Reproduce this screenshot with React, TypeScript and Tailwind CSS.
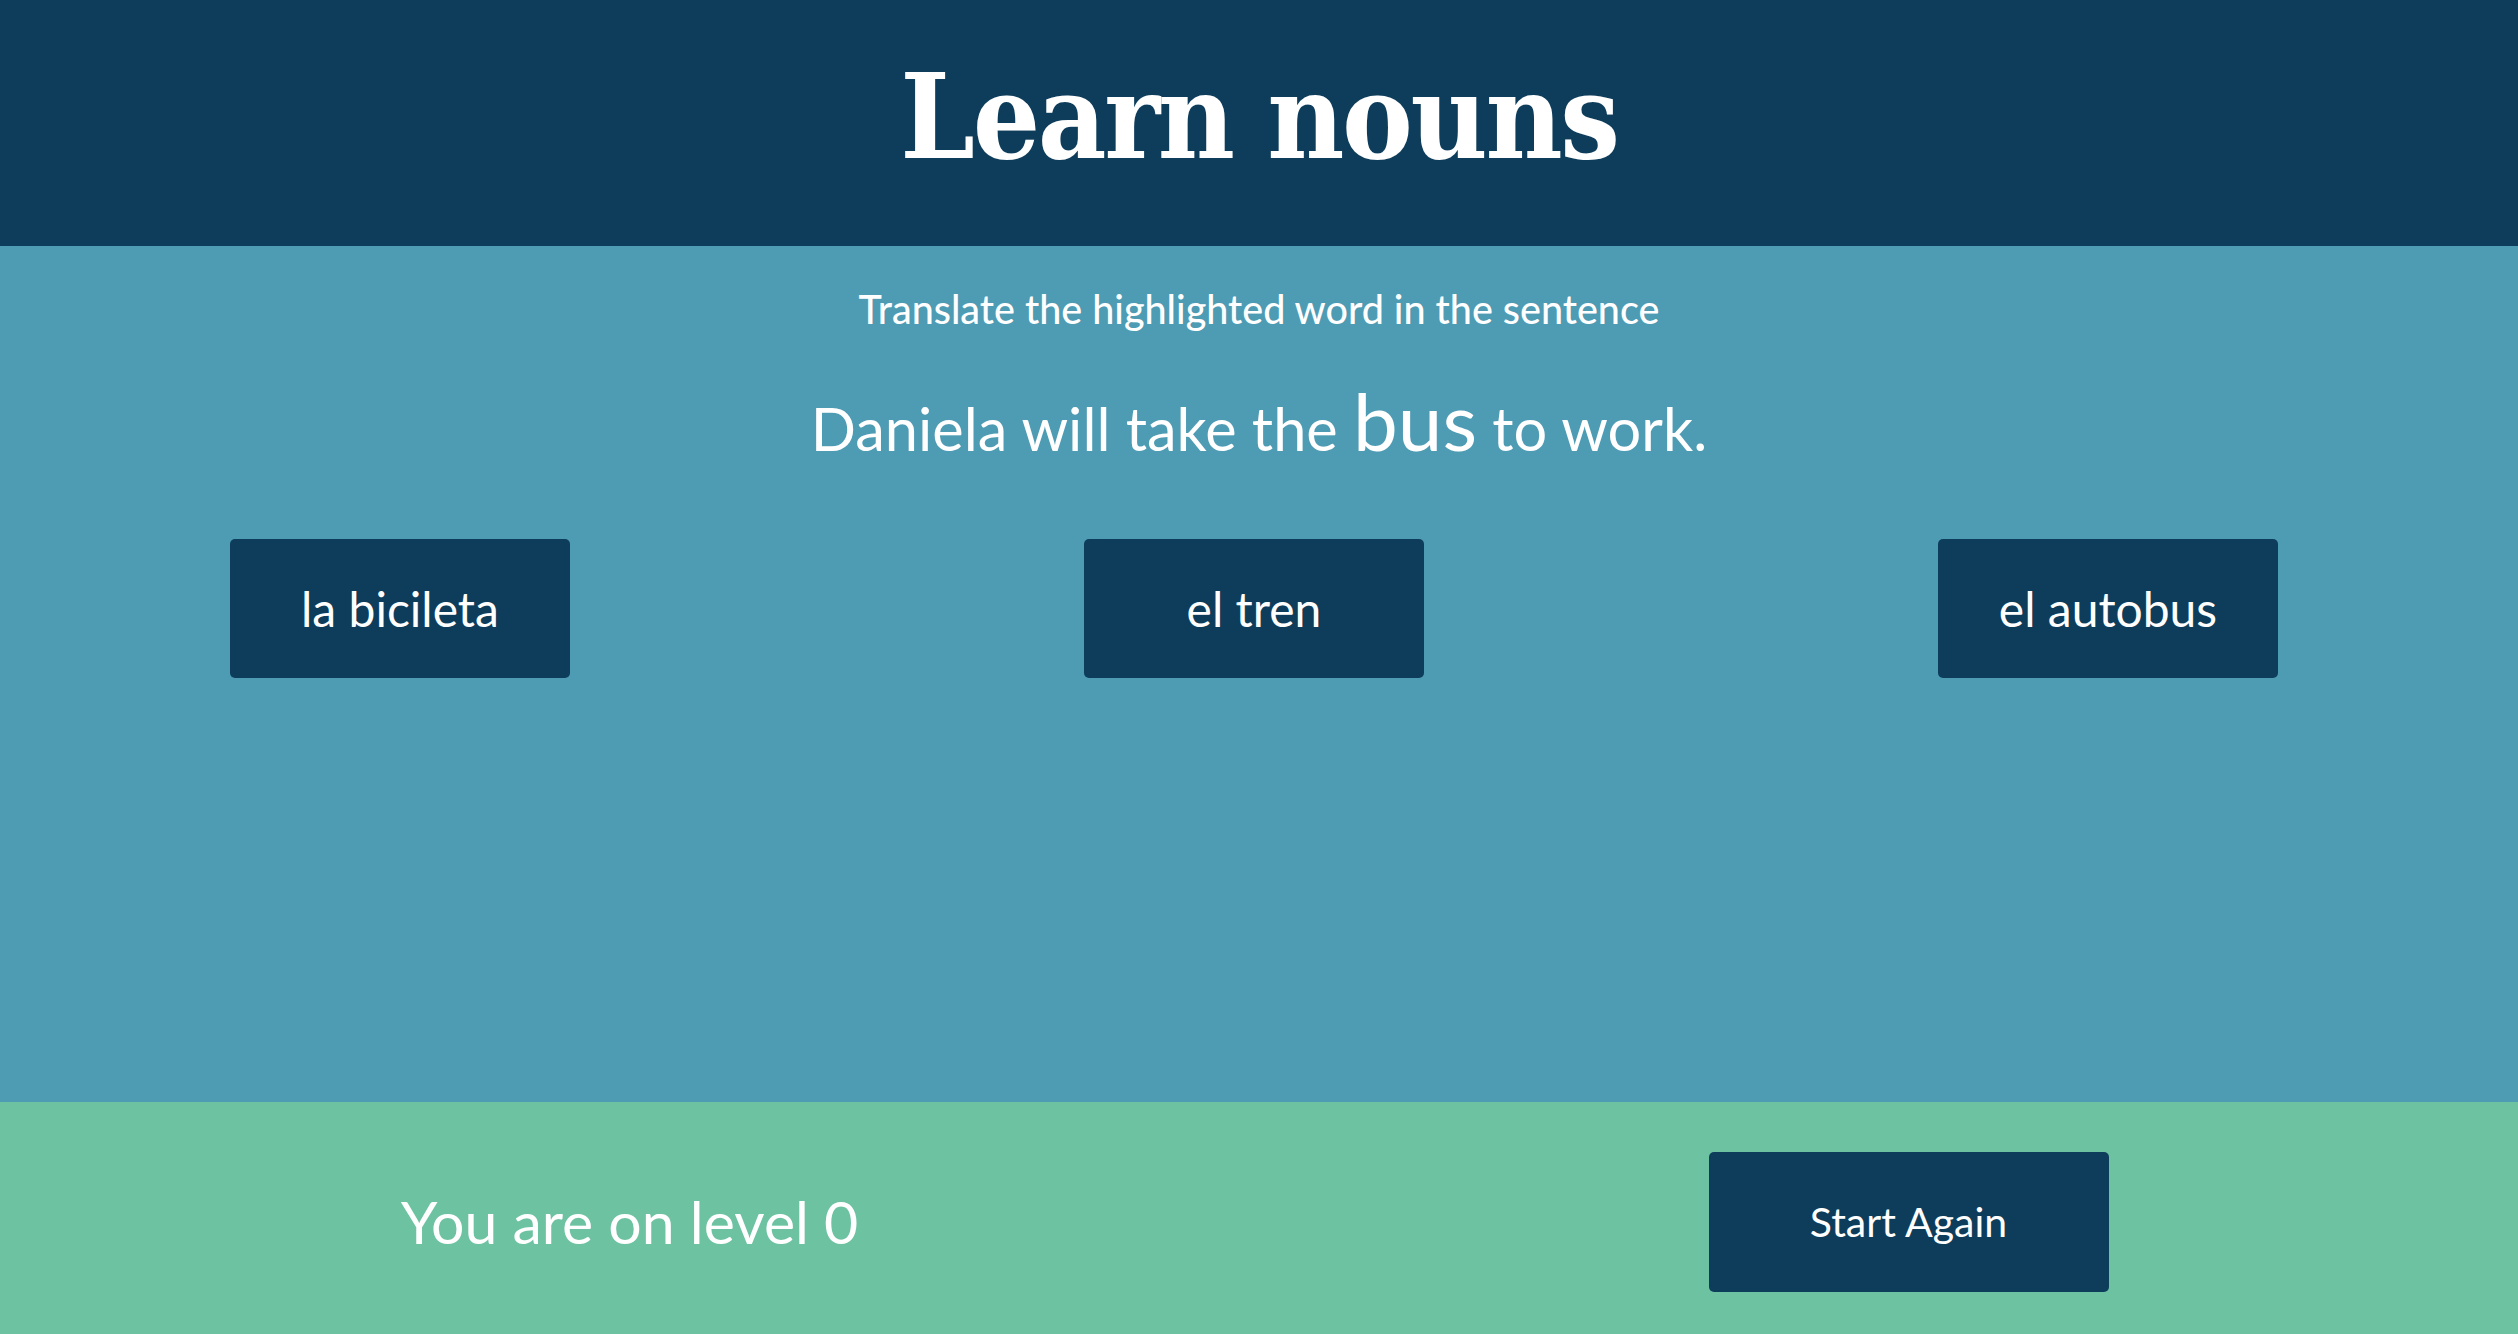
import React from 'react';

const choices = ['la bicileta', 'el tren', 'el autobus'];

const lato = "font-['Lato','Liberation_Sans',sans-serif]";

const ChoiceButton: React.FC<{ label: string }> = ({ label }) => (
  <button
    className={`w-[340px] h-[139px] rounded-[5px] bg-[#0e3d5b] text-white text-[48px] leading-[1.2] ${lato}`}
  >
    {label}
  </button>
);

export default function App() {
  return (
    <div className={`w-full h-[1334px] flex flex-col ${lato}`}>
      <header className="h-[246px] shrink-0 bg-[#0e3d5b] flex items-center justify-center pb-3">
        <h1 className="text-white font-bold text-[118px] leading-none tracking-[-0.02em] font-['DejaVu_Serif_Condensed','DejaVu_Serif',serif]">
          Learn nouns
        </h1>
      </header>

      <main className="flex-1 bg-[#4e9bb4] flex flex-col items-center pt-[39px]">
        <p className="text-white text-[39.5px] leading-[1.2] font-medium">
          Translate the highlighted word in the sentence
        </p>
        <p className="mt-[40px] text-white text-[59.5px] leading-[1.2]">
          Daniela will take the <span className="text-[80px]">bus</span> to work.
        </p>
        <div className="mt-[71px] w-full flex justify-between pl-[230px] pr-[240px]">
          {choices.map((c) => (
            <ChoiceButton key={c} label={c} />
          ))}
        </div>
      </main>

      <footer className="h-[232px] shrink-0 bg-[#6dc2a1] grid grid-cols-2 items-center pt-2">
        <div className="flex justify-center">
          <span className="text-white text-[59px] leading-[1.2]">You are on level 0</span>
        </div>
        <div className="flex justify-center pl-10">
          <button className="w-[400px] h-[140px] rounded-[5px] bg-[#0e3d5b] text-white text-[41px] leading-[1.2]">
            Start Again
          </button>
        </div>
      </footer>
    </div>
  );
}
